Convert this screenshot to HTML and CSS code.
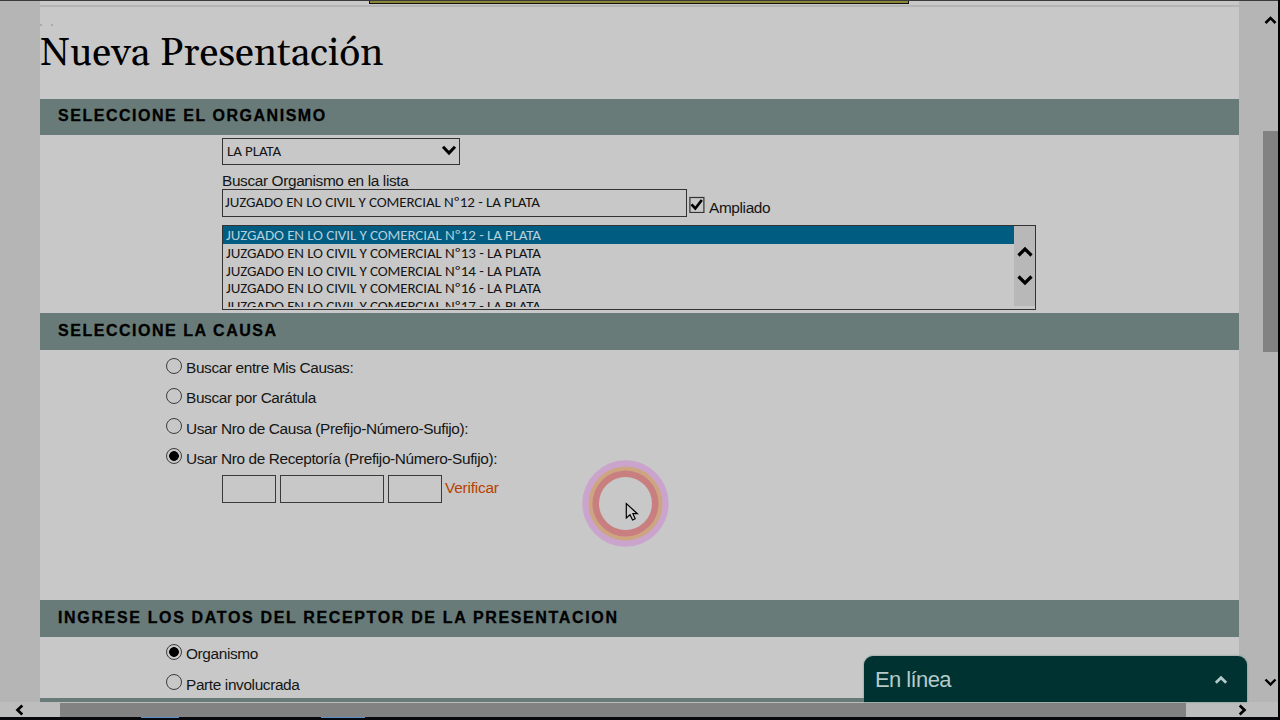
FILE: index.html
```html
<!DOCTYPE html>
<html lang="es">
<head>
<meta charset="utf-8">
<title>Nueva Presentación</title>
<link rel="stylesheet" href="styles.css">
</head>
<body>
<div class="screen">
  <div class="viewport">
    <main class="page">
      <div class="page-top"><div class="notice"></div></div>
      <div class="crumbs"><span class="dot"></span><span class="dot"></span></div>
      <h1 class="title"><span>Nueva Presentación</span></h1>

      <h2 class="band band-first"><span>SELECCIONE EL ORGANISMO</span></h2>
      <section class="organismo">
        <div class="select"><span class="select-text">LA PLATA</span>
          <svg class="select-arrow" width="16" height="12" viewBox="0 0 16 12"><path d="M2 1.700 8 8.100 14 1.700" fill="none" stroke="#000" stroke-width="3"/></svg>
        </div>
        <div class="label">Buscar Organismo en la lista</div>
        <div class="search-row">
          <div class="search">JUZGADO EN LO CIVIL Y COMERCIAL Nº12 - LA PLATA</div>
          <svg class="check" width="16" height="17" viewBox="0 0 16 17"><rect x=".9" y="1.500" width="14" height="15" fill="none" stroke="#333" stroke-width="1.200"/><path d="M2.500 8.300 6.300 12.500 12.800 4" fill="none" stroke="#000" stroke-width="2.700"/></svg>
          <span class="ampliado">Ampliado</span>
        </div>
        <div class="listbox">
          <div class="options">
            <div class="option selected">JUZGADO EN LO CIVIL Y COMERCIAL Nº12 - LA PLATA</div>
            <div class="option">JUZGADO EN LO CIVIL Y COMERCIAL Nº13 - LA PLATA</div>
            <div class="option">JUZGADO EN LO CIVIL Y COMERCIAL Nº14 - LA PLATA</div>
            <div class="option">JUZGADO EN LO CIVIL Y COMERCIAL Nº16 - LA PLATA</div>
            <div class="option">JUZGADO EN LO CIVIL Y COMERCIAL Nº17 - LA PLATA</div>
          </div>
          <div class="list-scroll">
            <svg width="16" height="12" viewBox="0 0 16 12"><path d="M1.500 9.500 8 3 14.500 9.500" fill="none" stroke="#000" stroke-width="3.200"/></svg>
            <svg width="16" height="12" viewBox="0 0 16 12"><path d="M1.500 2.500 8 9 14.500 2.500" fill="none" stroke="#000" stroke-width="3.200"/></svg>
          </div>
        </div>
      </section>

      <h2 class="band"><span>SELECCIONE LA CAUSA</span></h2>
      <section class="causa">
        <div class="radio-row"><i class="radio"></i><span>Buscar entre Mis Causas:</span></div>
        <div class="radio-row"><i class="radio"></i><span>Buscar por Carátula</span></div>
        <div class="radio-row"><i class="radio"></i><span>Usar Nro de Causa (Prefijo-Número-Sufijo):</span></div>
        <div class="radio-row"><i class="radio on"></i><span>Usar Nro de Receptoría (Prefijo-Número-Sufijo):</span></div>
        <div class="number-row">
          <div class="box short"></div><div class="box long"></div><div class="box short"></div>
          <a class="verify">Verificar</a>
        </div>
      </section>

      <h2 class="band"><span class="wide">INGRESE LOS DATOS DEL RECEPTOR DE LA PRESENTACION</span></h2>
      <section class="receptor">
        <div class="radio-row"><i class="radio on"></i><span>Organismo</span></div>
        <div class="radio-row"><i class="radio"></i><span class="down">Parte involucrada</span></div>
      </section>
      <div class="band-cut"></div>
    </main>
    <div class="vscroll">
      <svg width="14" height="12" viewBox="0 0 14 12"><path d="M1.500 9 6.500 4 11.500 9" fill="none" stroke="#000" stroke-width="2.600"/></svg>
      <div class="vthumb"></div>
      <svg class="vdown" width="14" height="12" viewBox="0 0 14 12"><path d="M1.500 3.500 6.500 8.500 11.500 3.500" fill="none" stroke="#000" stroke-width="2.400"/></svg>
    </div>
  </div>
  <div class="hscroll">
    <svg class="hleft" width="12" height="12" viewBox="0 0 12 12"><path d="M8.300 1.500 3.500 6 8.300 10.500" fill="none" stroke="#000" stroke-width="2.700"/></svg>
    <div class="hthumb"></div>
    <svg class="hright" width="12" height="12" viewBox="0 0 12 12"><path d="M3.700 1.500 8.500 6 3.700 10.500" fill="none" stroke="#000" stroke-width="2.700"/></svg>
  </div>
  <div class="taskbar"><i class="task a"></i><i class="task b"></i></div>

  <div class="chat"><span class="chat-text">En línea</span>
    <svg width="16" height="12" viewBox="0 0 16 12"><path d="M2.800 8.800 8 3.800 13.200 8.800" fill="none" stroke="#b4cbc9" stroke-width="2.800"/></svg>
  </div>
  <svg class="pointer" width="88" height="88" viewBox="0 0 88 88">
    <circle cx="44.500" cy="43.500" r="43.200" fill="#cba4cd"/>
    <circle cx="44.500" cy="43.500" r="37" fill="#cda581"/>
    <circle cx="44.500" cy="43.500" r="33" fill="#c97f7f"/>
    <circle cx="44.500" cy="43.500" r="26.500" fill="#c8c8c8"/>
    <path d="M45.300 43.500v14.500l3.700-3.300 2.600 5.300 2.600-1.200-2.300-5.100h4.500z" fill="#ccc" stroke="#000" stroke-width="1.200"/>
  </svg>
</div>
</body>
</html>
```
FILE: styles.css
```css
* { box-sizing: border-box; }
body { margin: 0; font-family: "Liberation Sans", Arial, sans-serif; color: #151515; }
.screen { position: relative; width: 1280px; height: 720px; overflow: hidden; display: flex; flex-direction: column; background: #b5b5b5; border-right: 2px solid #000; }
.viewport { height: 702px; display: flex; justify-content: space-between; border-top: 1px solid #3d3a3e; }
.page { width: 1199px; margin-left: 40px; background: #c8c8c8; overflow: hidden; }
.page-top { height: 6px; padding-left: 329px; border-bottom: 2px solid #b4b4b4; }
.notice { width: 540px; height: 3px; background: #8b8732; border: 1px solid #111; border-top: 0; }
.crumbs { height: 21px; display: flex; gap: 9px; padding-top: 17px; }
.dot { width: 2px; height: 2px; background: #aaa; }
.title { margin: 0; height: 71px; padding-top: 1px; font: 400 39px/50px Gelasio, "Liberation Serif", serif; white-space: nowrap; color: #000; }
.band { margin: 0; height: 37px; padding-left: 18px; background: #687b79; font-size: 16px; line-height: 35px; letter-spacing: 1.530px; color: #000; white-space: nowrap; -webkit-text-stroke: .3px #000; }
.band-first { height: 36px; line-height: 34px; }
.wide { letter-spacing: 1.650px; }
.organismo { height: 178px; padding: 3px 0 0 182px; }
.select { width: 238px; height: 27px; border: 1px solid #333; display: flex; justify-content: space-between; padding: 0 2px 0 4px; line-height: 24px; }
.select-arrow { margin-top: 6px; }
.select, .search, .options { font-family: Carlito, Lato, sans-serif; font-size: 15px; letter-spacing: -.1px; white-space: nowrap; }
.label, .ampliado, .radio-row, .verify { font-size: 15.400px; letter-spacing: -.37px; }
.label { height: 24px; line-height: 31px; }
.search-row { display: flex; height: 29px; }
.search { width: 465px; height: 28px; border: 1px solid #333; padding-left: 2px; line-height: 25px; margin-right: 2px; }
.check { margin-top: 7px; }
.ampliado { margin-left: 4px; line-height: 37px; }
.listbox { width: 814px; height: 85px; margin-top: 7px; border: 1px solid #333; display: flex; padding-bottom: 3px; }
.options { flex: 1; height: 81px; overflow: hidden; }
.option { height: 17.800px; line-height: 19px; padding-left: 3px; }
.selected { background: #005c81; color: #b6cfdb; }
.list-scroll { width: 21px; background: #b8b8b8; display: flex; flex-direction: column; align-items: center; gap: 16px; padding-top: 20px; }
.causa { height: 250px; padding: 4px 0 0 126px; }
.radio-row { height: 30.300px; display: flex; gap: 4px; line-height: 28px; white-space: nowrap; }
.down { line-height: 30px; }
.radio { width: 16px; height: 16px; border: 1px solid #3c3c3c; border-radius: 50%; margin-top: 3.500px; }
.radio.on { background: radial-gradient(circle, #000 4.500px, transparent 5.200px); }
.number-row { display: flex; padding: 0 0 0 56px; gap: 4px; }
.box { height: 28px; border: 1px solid #3a3a3a; }
.short { width: 54px; }
.long { width: 104px; }
.verify { color: #b94000; line-height: 25px; margin-left: -1px; letter-spacing: -.2px; }
.receptor { height: 61px; padding: 3px 0 0 126px; }
.band-cut { height: 4px; background: #687b79; }
.vscroll { width: 15px; display: flex; flex-direction: column; align-items: center; padding-top: 13px; }
.vthumb { width: 15px; height: 221px; margin-top: 105px; background: #828282; }
.vdown { margin-top: 324px; }
.hscroll { height: 15px; display: flex; align-items: flex-end; background: #bdbdbd; }
.hleft { margin: 0 34px 1px 14px; }
.hthumb { width: 1126px; height: 14px; background: #828282; }
.hright { margin: 0 0 1px 50px; }
.taskbar { height: 3px; background: #08090d; display: flex; padding-left: 141px; }
.task { height: 1px; background: #5b8fca; }
.a { width: 38px; margin-right: 142px; }
.b { width: 44px; }
.chat { position: absolute; left: 864px; top: 656px; width: 383px; height: 46px; border-radius: 9px 9px 0 0; background: #003231; color: #b4cbc9; display: flex; justify-content: space-between; align-items: center; padding: 1px 18px 0 11px; font-size: 22px; letter-spacing: -.6px; box-shadow: 0 0 2px #628380; }
.pointer { position: absolute; left: 581px; top: 460px; }
```
